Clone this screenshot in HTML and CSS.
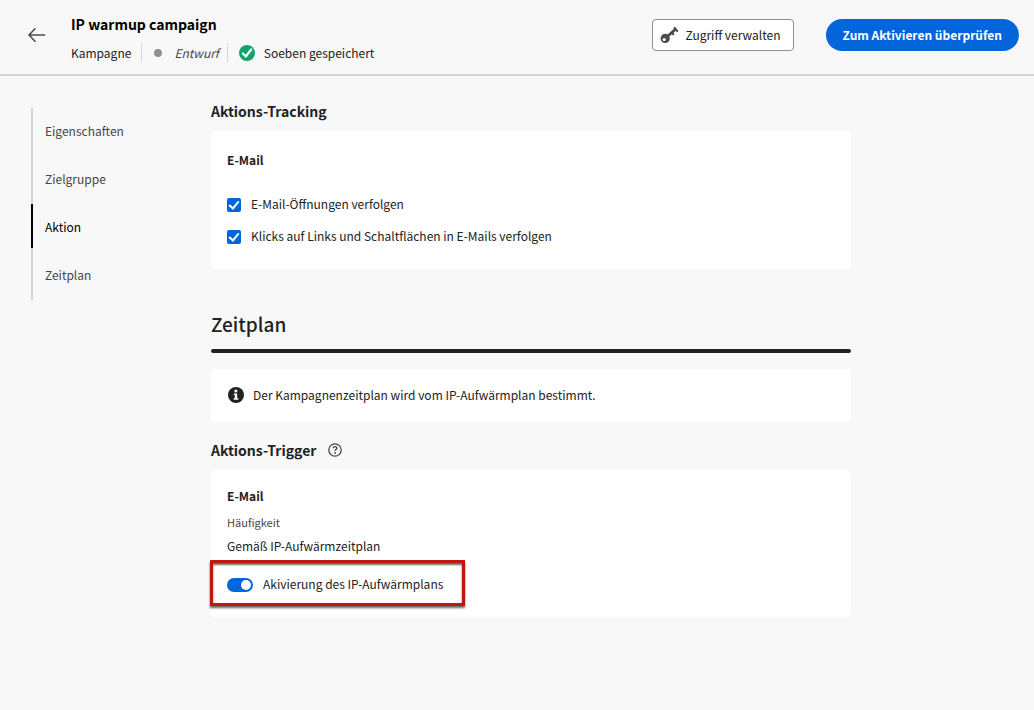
FILE: index.html
```html
<!DOCTYPE html>
<html lang="de">
<head>
<meta charset="utf-8">
<meta name="viewport" content="width=device-width, initial-scale=1">
<title>IP warmup campaign</title>
<link rel="stylesheet" href="styles.css">
</head>
<body>
<header class="topbar">
  <button class="back" type="button" aria-label="Zurück">
    <svg width="18" height="16" viewBox="0 0 18 16" fill="none" stroke="#4b4b4b" stroke-width="1.6" stroke-linecap="round" stroke-linejoin="round"><path d="M16.500 8H1M7 1.800L1 8l6 6.200"/></svg>
  </button>
  <div class="identity">
    <h1 class="title">IP warmup campaign</h1>
    <div class="meta">
      <span class="meta-item">Kampagne</span>
      <span class="meta-item draft"><span class="dot"></span><em>Entwurf</em></span>
      <span class="meta-item saved">
        <svg width="16" height="16" viewBox="0 0 16 16"><circle cx="8" cy="8" r="8" fill="#12a36d"/><path d="M3.800 8.500l3 3 5.400-7" fill="none" stroke="#fff" stroke-width="2.200" stroke-linecap="round" stroke-linejoin="round"/></svg>
        Soeben gespeichert
      </span>
    </div>
  </div>
  <div class="actions">
    <button class="btn btn-outline" type="button">
      <svg width="18" height="18" viewBox="0 0 18 18" fill="none" stroke="#4b4b4b"><path d="M7 10.800L15.500 3.200" stroke-width="2.800"/><path d="M14.600 2l2.700 3" stroke-width="2.200" stroke-linecap="round"/><path d="M11.800 6.600l1.500 1.600" stroke-width="2.200" stroke-linecap="round"/><circle cx="5.200" cy="12.400" r="4.600" fill="#4b4b4b" stroke="none"/><circle cx="4.200" cy="13.500" r="1.600" fill="#fff" stroke="none"/></svg>
      Zugriff verwalten
    </button>
    <button class="btn btn-primary" type="button">Zum Aktivieren überprüfen</button>
  </div>
</header>

<div class="page">
  <nav class="steps" aria-label="Abschnitte">
    <a class="step" href="#eigenschaften">Eigenschaften</a>
    <a class="step" href="#zielgruppe">Zielgruppe</a>
    <a class="step step-active" href="#aktion" aria-current="true">Aktion</a>
    <a class="step" href="#zeitplan">Zeitplan</a>
  </nav>

  <main class="content">
    <section id="aktion">
      <h3 class="subheading">Aktions-Tracking</h3>
      <div class="card">
        <h4 class="card-title">E-Mail</h4>
        <div class="checks">
          <label class="check"><input class="checkbox" type="checkbox" checked>E-Mail-Öffnungen verfolgen</label>
          <label class="check"><input class="checkbox" type="checkbox" checked>Klicks auf Links und Schaltflächen in E-Mails verfolgen</label>
        </div>
      </div>
    </section>

    <section class="schedule" id="zeitplan">
      <h2 class="heading">Zeitplan</h2>
      <div class="card notice">
        <svg width="16" height="16" viewBox="0 0 16 16"><circle cx="8" cy="8" r="8" fill="#222"/><circle cx="7.900" cy="3.900" r="1.500" fill="#fff"/><path fill="#fff" d="M5.800 6.500h3.400v4.700h1.200v1.600H5.600v-1.600h1.200V8.100h-1z"/></svg>
        Der Kampagnenzeitplan wird vom IP-Aufwärmplan bestimmt.
      </div>
      <div class="subheading-row">
        <h3 class="subheading">Aktions-Trigger</h3>
        <button class="help" type="button" aria-label="Hilfe">
          <svg width="14" height="14" viewBox="0 0 14 14" fill="none" stroke="#464646"><circle cx="7" cy="7" r="6.200" stroke-width="1.300"/><path d="M5.200 5.100c.2-1 1-1.500 1.900-1.500 1 0 1.800.6 1.800 1.500 0 1.400-1.800 1.400-1.800 3" stroke-width="1.400"/><circle cx="7.100" cy="10" r=".9" fill="#464646" stroke="none"/></svg>
        </button>
      </div>
      <div class="card trigger">
        <h4 class="card-title">E-Mail</h4>
        <dl class="field">
          <dt class="field-label">Häufigkeit</dt>
          <dd class="field-value">Gemäß IP-Aufwärmzeitplan</dd>
        </dl>
        <label class="toggle"><input class="switch" type="checkbox" role="switch" checked>Akivierung des IP-Aufwärmplans</label>
      </div>
    </section>
  </main>
</div>
</body>
</html>
```
FILE: styles.css
```css
*,
*::before,
*::after {
  box-sizing: border-box;
}

body {
  margin: 0;
  min-height: 100vh;
  background: #f8f8f8;
  color: #222;
  font-family: "Noto Sans CJK JP", "Noto Sans", sans-serif;
  font-size: 12px;
  line-height: 24px;
}

h1, h2, h3, h4, dl, dd {
  margin: 0;
}

button {
  font: inherit;
  cursor: pointer;
}

svg {
  display: block;
  flex: none;
}

.topbar {
  display: flex;
  align-items: flex-start;
  padding: 11px 15px 8px 28px;
  border-bottom: 2px solid #d5d5d5;
}

.back {
  display: flex;
  align-items: center;
  height: 32px;
  padding: 0;
  margin: 8px 25px 0 0;
  border: 0;
  background: none;
}

.title {
  color: #000;
  font-size: 14px;
  font-weight: 700;
  line-height: 27px;
}

.meta {
  display: flex;
  align-items: center;
  padding: 5px 0 4px;
  line-height: 19px;
}

.meta-item {
  display: flex;
  align-items: center;
}

.meta-item + .meta-item {
  margin-left: 10px;
  padding-left: 12px;
  border-left: 1px solid #d5d5d5;
}

.meta-item + .saved {
  margin-left: 8px;
  padding-left: 11px;
}

.draft {
  gap: 12px;
  color: #464646;
}

.dot {
  width: 8px;
  height: 8px;
  border-radius: 50%;
  background: #909090;
}

.saved {
  gap: 9px;
}

.actions {
  display: flex;
  gap: 32px;
  margin: 8px 0 0 auto;
}

.btn {
  display: flex;
  align-items: center;
  height: 32px;
  white-space: nowrap;
}

.btn-outline {
  gap: 7px;
  padding: 0 12px 0 7px;
  border: 1px solid #909090;
  border-radius: 4px;
  background: #fff;
  color: #222;
}

.btn-primary {
  padding: 0 17px;
  border: 0;
  border-radius: 16px;
  background: #0265dc;
  color: #fff;
  font-weight: 700;
}

.page {
  display: flex;
  align-items: flex-start;
  padding: 23px 24px 24px 31px;
}

.steps {
  display: flex;
  flex: 0 0 180px;
  flex-direction: column;
  margin-top: 9px;
}

.step {
  display: flex;
  align-items: center;
  height: 48px;
  padding: 0 0 2px 14px;
  background: linear-gradient(#d5d5d5, #d5d5d5) left / 2px 100% no-repeat;
  color: #464646;
  text-decoration: none;
}

.step-active {
  background-image: linear-gradient(#000 44px, #d5d5d5 44px);
  color: #000;
}

.content {
  flex: 1;
  max-width: 640px;
}

.subheading {
  font-size: 14px;
  font-weight: 700;
  line-height: 24px;
}

.content .subheading + .card {
  margin-top: 8px;
}

.card {
  padding: 17px 16px;
  border-radius: 4px;
  background: #fff;
}

.card-title {
  font-size: 12px;
  font-weight: 700;
}

.checks {
  margin-top: 16px;
}

.check,
.toggle {
  display: flex;
  align-items: center;
  gap: 10px;
  height: 32px;
}

.checkbox {
  appearance: none;
  width: 14px;
  height: 14px;
  margin: 2px 0 0;
  border-radius: 2px;
  background: #0265dc;
}

.checkbox:checked::before {
  content: "";
  display: block;
  width: 6px;
  height: 10px;
  margin: 1px 4px;
  border: solid #fff;
  border-width: 0 2px 2px 0;
  transform: rotate(40deg);
}

.schedule {
  margin-top: 39px;
}

.heading {
  font-size: 19px;
  font-weight: 500;
  line-height: 32px;
}

.heading::after {
  content: "";
  display: block;
  height: 4px;
  margin-top: 9px;
  border-radius: 2px;
  background: #222;
}

.notice {
  display: flex;
  align-items: center;
  gap: 9px;
  margin-top: 16px;
  padding: 14px 17px 15px;
}

.subheading-row {
  display: flex;
  align-items: center;
  gap: 12px;
  margin: 16px 0 8px;
}

.help {
  padding: 0;
  border: 0;
  background: none;
}

.trigger {
  padding-top: 14px;
}

.field {
  margin: 4px 0 10px;
}

.field-label {
  padding-bottom: 2px;
  color: #464646;
  font-size: 11px;
  line-height: 20px;
}

.toggle {
  position: relative;
  width: fit-content;
}

.toggle::after {
  content: "";
  position: absolute;
  inset: -8px -22px -6px -17px;
  border: 3px solid #c0160b;
  box-shadow: 0 2px 2px rgba(0, 0, 0, 0.6), inset 0 2px 2px rgba(0, 0, 0, 0.6);
  pointer-events: none;
}

.switch {
  appearance: none;
  display: flex;
  justify-content: flex-end;
  width: 26px;
  height: 14px;
  margin: 2px 0 0;
  padding: 2px;
  border-radius: 7px;
  background: #0265dc;
}

.switch::before {
  content: "";
  width: 10px;
  height: 10px;
  border-radius: 50%;
  background: #fff;
}

.switch:not(:checked) {
  justify-content: flex-start;
  background: #909090;
}
```
